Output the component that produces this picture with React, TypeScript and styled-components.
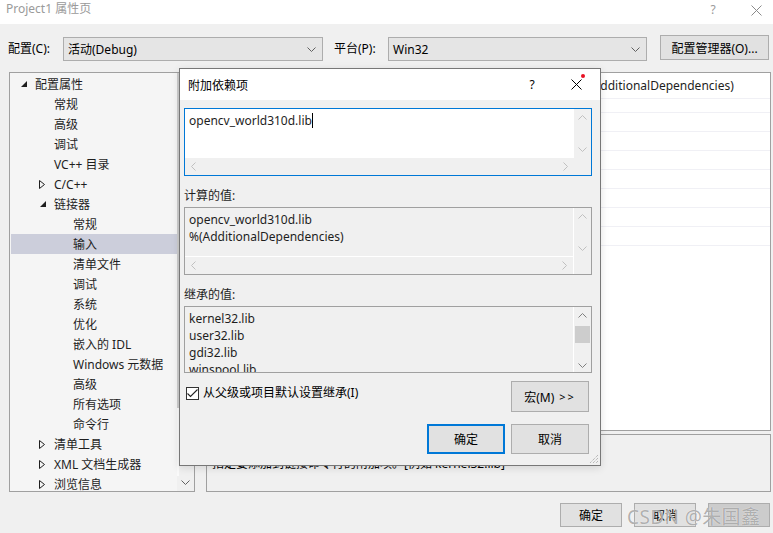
import React from 'react';
import styled, { createGlobalStyle } from 'styled-components';

const GlobalStyle = createGlobalStyle`
  html, body { margin: 0; padding: 0; background: #f0f0f0; }
  * { box-sizing: border-box; }
`;

const FONT = `"Noto Sans", "Noto Sans CJK SC", sans-serif`;

const Root = styled.div`
  position: relative;
  width: 773px;
  height: 533px;
  overflow: hidden;
  background: #f0f0f0;
  font-family: ${FONT};
  font-size: 12px;
  color: #000;
  display: flex;
  flex-direction: column;
`;

const TitleBar = styled.div`
  height: 24px;
  background: #fff;
  display: flex;
  align-items: flex-start;
  padding: 1px 0 0 6px;
  color: #9a9a9a;
  line-height: 16px;
`;

const TitleText = styled.div`
  flex: 1;
`;

const TitleButton = styled.div<{ w: number; ml?: number }>`
  width: ${p => p.w}px;
  margin-left: ${p => p.ml || 0}px;
  height: 18px;
  display: flex;
  align-items: center;
  justify-content: center;
  color: #9a9a9a;
`;

const ConfigRow = styled.div`
  height: 48px;
  display: flex;
  align-items: flex-start;
  padding: 13px 0 0 8px;
`;

const FieldLabel = styled.span<{ w: number; ml?: number }>`
  width: ${p => p.w}px;
  margin-left: ${p => p.ml || 0}px;
  line-height: 24px;
  white-space: nowrap;
`;

const Select = styled.div<{ w: number }>`
  width: ${p => p.w}px;
  height: 24px;
  background: #e5e5e5;
  border: 1px solid #adadad;
  display: flex;
  align-items: center;
  padding: 0 6px 0 4px;
`;

const SelectText = styled.div`
  flex: 1;
`;

const Button = styled.div<{ w: number; h: number; primary?: boolean; dim?: boolean }>`
  width: ${p => p.w}px;
  height: ${p => p.h}px;
  background: ${p => (p.dim ? '#cccccc' : '#e1e1e1')};
  border: ${p => (p.primary ? '2px solid #0078d7' : '1px solid #adadad')};
  display: flex;
  align-items: center;
  justify-content: center;
  white-space: nowrap;
`;

const ManagerButton = styled(Button)`
  margin: -2px 0 0 13px;
`;

const Main = styled.div`
  display: flex;
  height: 421px;
`;

const Tree = styled.div`
  margin-left: 9px;
  width: 186px;
  height: 420px;
  border: 1px solid #a0a0a0;
  background: #f5f5f5;
  display: flex;
  overflow: hidden;
`;

const TreeList = styled.div`
  flex: 1;
  padding-top: 1px;
`;

const TreeRow = styled.div<{ level: number; selected?: boolean }>`
  height: 20px;
  display: flex;
  align-items: center;
  position: relative;
  margin-left: 1px;
  padding-left: ${p => 24 + p.level * 19}px;
  background: ${p => (p.selected ? '#cccedb' : 'transparent')};
  white-space: nowrap;
  color: #1e1e1e;
`;

const TreeArrow = styled.span`
  position: absolute;
  top: 0;
  height: 20px;
  display: flex;
  align-items: center;
`;

const TreeScroll = styled.div`
  width: 17px;
  display: flex;
  flex-direction: column;
  align-items: center;
  background: #f0f0f0;
  padding-bottom: 6px;
`;

const TreeThumb = styled.div`
  align-self: stretch;
  height: 335px;
  border-left: 2px solid #cdcdcd;
`;

const TreeTrack = styled.div`
  align-self: stretch;
  flex: 1;
  border-left: 2px solid #fafafa;
  margin-bottom: 4px;
`;

const RightCol = styled.div`
  margin-left: 11px;
  width: 565px;
  display: flex;
  flex-direction: column;
  gap: 3px;
`;

const Grid = styled.div`
  height: 359px;
  border: 1px solid #a0a0a0;
  background: #fff;
  overflow: hidden;
`;

const GridRow = styled.div<{ h: number }>`
  height: ${p => p.h}px;
  border-bottom: 1px solid #f0f0f5;
  display: flex;
  align-items: center;
`;

const GridName = styled.span`
  width: 246px;
  padding-left: 8px;
`;

const GridValue = styled.span`
  color: #1e1e1e;
  white-space: nowrap;
`;

const Desc = styled.div`
  height: 58px;
  border: 1px solid #a0a0a0;
  padding: 5px 0 0 5px;
  line-height: 16px;
`;

const DescTitle = styled.div`
  font-weight: bold;
`;

const Footer = styled.div`
  display: flex;
  justify-content: flex-end;
  gap: 12px;
  padding: 10px 3px 0 0;
`;

const Dialog = styled.div`
  position: absolute;
  left: 179px;
  top: 68px;
  width: 422px;
  height: 398px;
  border: 1px solid #777;
  background: #f0f0f0;
  display: flex;
  flex-direction: column;
  box-shadow: 0 2px 8px rgba(0, 0, 0, 0.12);
`;

const DialogTitle = styled.div`
  height: 31px;
  background: #fff;
  display: flex;
  align-items: center;
  padding-left: 8px;
  position: relative;
`;

const DialogTitleText = styled.div`
  flex: 1;
`;

const DialogIcon = styled.div<{ w: number }>`
  width: ${p => p.w}px;
  display: flex;
  justify-content: center;
  align-items: center;
`;

const RedDot = styled.span`
  position: absolute;
  left: 401px;
  top: 5px;
  width: 4px;
  height: 4px;
  border-radius: 50%;
  background: #e81123;
`;

const DialogBody = styled.div`
  flex: 1;
  padding: 8px 8px 10px 4px;
  display: flex;
  flex-direction: column;
  position: relative;
`;

const TextBox = styled.div<{ h: number; active?: boolean; hscroll?: boolean }>`
  height: ${p => p.h}px;
  border: 1px solid ${p => (p.active ? '#0078d7' : '#a0a0a0')};
  display: grid;
  grid-template-columns: 1fr 17px;
  grid-template-rows: ${p => (p.hscroll ? '1fr 17px' : '1fr')};
  background: #f0f0f0;
  overflow: hidden;
`;

const TextArea = styled.div<{ active?: boolean; open?: boolean }>`
  background: ${p => (p.active ? '#fff' : '#f0f0f0')};
  padding: ${p => (p.active ? '3px 4px' : '3px 4px 0')};
  line-height: 17px;
  color: #1e1e1e;
  overflow: hidden;
  border-right: ${p => (p.active ? 'none' : '1px solid #fff')};
  border-bottom: ${p => (p.active || p.open ? 'none' : '1px solid #fff')};
`;

const Caret = styled.span`
  display: inline-block;
  width: 1px;
  height: 15px;
  background: #000;
  vertical-align: -3px;
`;

const VScroll = styled.div`
  display: flex;
  flex-direction: column;
  align-items: center;
  justify-content: space-between;
  padding: 6px 0;
`;

const HScroll = styled.div<{ edge?: boolean }>`
  display: flex;
  align-items: center;
  justify-content: space-between;
  padding: 0 6px;
  border-right: ${p => (p.edge ? '1px solid #fff' : 'none')};
`;

const Corner = styled.div``;

const Thumb = styled.div`
  width: 15px;
  height: 17px;
  background: #cdcdcd;
`;

const ScrollCol = styled.div`
  display: flex;
  flex-direction: column;
  align-items: center;
  padding: 6px 0 4px;
  gap: 8px;
`;

const Spacer = styled.div`
  flex: 1;
`;

const BoxLabel = styled.div`
  line-height: 16px;
  padding: 12px 0 3px;
  color: #1e1e1e;
`;

const CheckRow = styled.div`
  display: flex;
  align-items: flex-start;
  margin-top: 8px;
  padding-right: 3px;
`;

const CheckBox = styled.span`
  width: 13px;
  height: 13px;
  border: 1px solid #333;
  background: #fff;
  margin: 6px 4px 0 2px;
  display: flex;
  align-items: center;
  justify-content: center;
`;

const CheckLabel = styled.span`
  flex: 1;
  line-height: 24px;
`;

const Arrows = styled.span`
  letter-spacing: 2px;
  margin-left: 5px;
  font-size: 11px;
`;

const DialogButtons = styled.div`
  display: flex;
  justify-content: flex-end;
  gap: 6px;
  margin-top: 12px;
  padding-right: 3px;
`;

const Grip = styled.span`
  position: absolute;
  right: 1px;
  bottom: 1px;
  display: flex;
`;

const Watermark = styled.div`
  position: absolute;
  left: 627px;
  top: 502px;
  font-size: 19px;
  letter-spacing: 0.4px;
  color: rgba(110, 110, 110, 0.55);
  text-shadow: 0 0 1px #fff;
  white-space: nowrap;
`;

const Chevron = ({ dir, color = '#c0c0c0' }: { dir: 'up' | 'down' | 'left' | 'right'; color?: string }) => {
  const pts = {
    up: '0.5,4.5 4.5,0.5 8.5,4.5',
    down: '0.5,0.5 4.5,4.5 8.5,0.5',
    left: '4.5,0.5 0.5,4.5 4.5,8.5',
    right: '0.5,0.5 4.5,4.5 0.5,8.5',
  }[dir];
  const vertical = dir === 'up' || dir === 'down';
  return (
    <svg width={vertical ? 9 : 5} height={vertical ? 5 : 9} style={{ display: 'block' }}>
      <polyline points={pts} fill="none" stroke={color} strokeWidth="1" />
    </svg>
  );
};

const Cross = ({ size, color }: { size: number; color: string }) => (
  <svg width={size} height={size} style={{ display: 'block' }}>
    <path d={`M0.5 0.5 L${size - 0.5} ${size - 0.5} M${size - 0.5} 0.5 L0.5 ${size - 0.5}`} stroke={color} strokeWidth="1" />
  </svg>
);

const Expanded = () => (
  <svg width="6" height="6" style={{ display: 'block' }}>
    <polygon points="6,0 6,6 0,6" fill="#1e1e1e" />
  </svg>
);

const Collapsed = () => (
  <svg width="6" height="9" style={{ display: 'block' }}>
    <polygon points="0.5,0.5 5.5,4.5 0.5,8.5" fill="none" stroke="#1e1e1e" strokeWidth="1" />
  </svg>
);

type Node = { t: string; l: number; exp?: boolean; col?: boolean; sel?: boolean };

const nodes: Node[] = [
  { t: '配置属性', l: 0, exp: true },
  { t: '常规', l: 1 },
  { t: '高级', l: 1 },
  { t: '调试', l: 1 },
  { t: 'VC++ 目录', l: 1 },
  { t: 'C/C++', l: 1, col: true },
  { t: '链接器', l: 1, exp: true },
  { t: '常规', l: 2 },
  { t: '输入', l: 2, sel: true },
  { t: '清单文件', l: 2 },
  { t: '调试', l: 2 },
  { t: '系统', l: 2 },
  { t: '优化', l: 2 },
  { t: '嵌入的 IDL', l: 2 },
  { t: 'Windows 元数据', l: 2 },
  { t: '高级', l: 2 },
  { t: '所有选项', l: 2 },
  { t: '命令行', l: 2 },
  { t: '清单工具', l: 1, col: true },
  { t: 'XML 文档生成器', l: 1, col: true },
  { t: '浏览信息', l: 1, col: true },
];

// first row is the one being edited, the rest are empty under the dialog
const gridRows = [
  { h: 26, name: '附加依赖项', value: 'opencv_world310d.lib;%(AdditionalDependencies)' },
  { h: 14, name: '', value: '' },
  { h: 19, name: '', value: '' },
  { h: 19, name: '', value: '' },
  { h: 19, name: '', value: '' },
  { h: 19, name: '', value: '' },
  { h: 19, name: '', value: '' },
  { h: 19, name: '', value: '' },
  { h: 19, name: '', value: '' },
];

export default function App() {
  return (
    <Root>
      <GlobalStyle />
      <TitleBar>
        <TitleText>Project1 属性页</TitleText>
        <TitleButton w={14}>?</TitleButton>
        <TitleButton w={33} ml={20}>
          <Cross size={11} color="#8a8a8a" />
        </TitleButton>
      </TitleBar>

      <ConfigRow>
        <FieldLabel w={55}>配置(C):</FieldLabel>
        <Select w={260}>
          <SelectText>活动(Debug)</SelectText>
          <Chevron dir="down" color="#606060" />
        </Select>
        <FieldLabel w={54} ml={11}>平台(P):</FieldLabel>
        <Select w={259}>
          <SelectText>Win32</SelectText>
          <Chevron dir="down" color="#606060" />
        </Select>
        <ManagerButton w={109} h={25}>配置管理器(O)...</ManagerButton>
      </ConfigRow>

      <Main>
        <Tree>
          <TreeList>
            {nodes.map((n, i) => (
              <TreeRow key={i} level={n.l} selected={n.sel}>
                {(n.exp || n.col) && (
                  <TreeArrow style={{ left: 10 + n.l * 19 - (n.col ? 1 : 0) }}>
                    {n.exp ? <Expanded /> : <Collapsed />}
                  </TreeArrow>
                )}
                {n.t}
              </TreeRow>
            ))}
          </TreeList>
          <TreeScroll>
            <TreeThumb />
            <TreeTrack />
            <Chevron dir="down" color="#606060" />
          </TreeScroll>
        </Tree>

        <RightCol>
          <Grid>
            {gridRows.map((r, i) => (
              <GridRow key={i} h={r.h}>
                <GridName>{r.name}</GridName>
                <GridValue>{r.value}</GridValue>
              </GridRow>
            ))}
          </Grid>
          <Desc>
            <DescTitle>附加依赖项</DescTitle>
            <div>指定要添加到链接命令行的附加项。[例如 kernel32.lib]</div>
          </Desc>
        </RightCol>
      </Main>

      <Footer>
        <Button w={62} h={24}>确定</Button>
        <Button w={62} h={24}>取消</Button>
        <Button w={62} h={24} dim />
      </Footer>

      <Dialog>
        <DialogTitle>
          <DialogTitleText>附加依赖项</DialogTitleText>
          <DialogIcon w={40}>?</DialogIcon>
          <DialogIcon w={48}>
            <Cross size={11} color="#000" />
          </DialogIcon>
          <RedDot />
        </DialogTitle>
        <DialogBody>
          <TextBox h={68} active hscroll>
            <TextArea active>
              opencv_world310d.lib<Caret />
            </TextArea>
            <VScroll>
              <Chevron dir="up" />
              <Chevron dir="down" />
            </VScroll>
            <HScroll>
              <Chevron dir="left" />
              <Chevron dir="right" />
            </HScroll>
            <Corner />
          </TextBox>

          <BoxLabel>计算的值:</BoxLabel>
          <TextBox h={68} hscroll>
            <TextArea>
              opencv_world310d.lib
              <br />
              %(AdditionalDependencies)
            </TextArea>
            <VScroll>
              <Chevron dir="up" />
              <Chevron dir="down" />
            </VScroll>
            <HScroll edge>
              <Chevron dir="left" />
              <Chevron dir="right" />
            </HScroll>
            <Corner />
          </TextBox>

          <BoxLabel>继承的值:</BoxLabel>
          <TextBox h={67}>
            <TextArea open>
              kernel32.lib
              <br />
              user32.lib
              <br />
              gdi32.lib
              <br />
              winspool.lib
            </TextArea>
            <ScrollCol>
              <Chevron dir="up" color="#808080" />
              <Thumb />
              <Spacer />
              <Chevron dir="down" color="#808080" />
            </ScrollCol>
          </TextBox>

          <CheckRow>
            <CheckBox>
              <svg width="11" height="9" style={{ display: 'block' }}>
                <polyline points="0.5,4.5 3.5,7.5 10.5,0.5" fill="none" stroke="#222" strokeWidth="1.1" />
              </svg>
            </CheckBox>
            <CheckLabel>从父级或项目默认设置继承(I)</CheckLabel>
            <Button w={78} h={31}>
              宏(M)<Arrows>&gt;&gt;</Arrows>
            </Button>
          </CheckRow>

          <DialogButtons>
            <Button w={78} h={30} primary>确定</Button>
            <Button w={78} h={30}>取消</Button>
          </DialogButtons>

          <Grip>
            <svg width="10" height="10" style={{ display: 'block' }}>
              <path d="M9 1 L1 9 M9 4 L4 9 M9 7 L7 9" stroke="#a0a0a0" strokeWidth="1" strokeDasharray="1 1" />
            </svg>
          </Grip>
        </DialogBody>
      </Dialog>

      <Watermark>CSDN @朱国鑫</Watermark>
    </Root>
  );
}
